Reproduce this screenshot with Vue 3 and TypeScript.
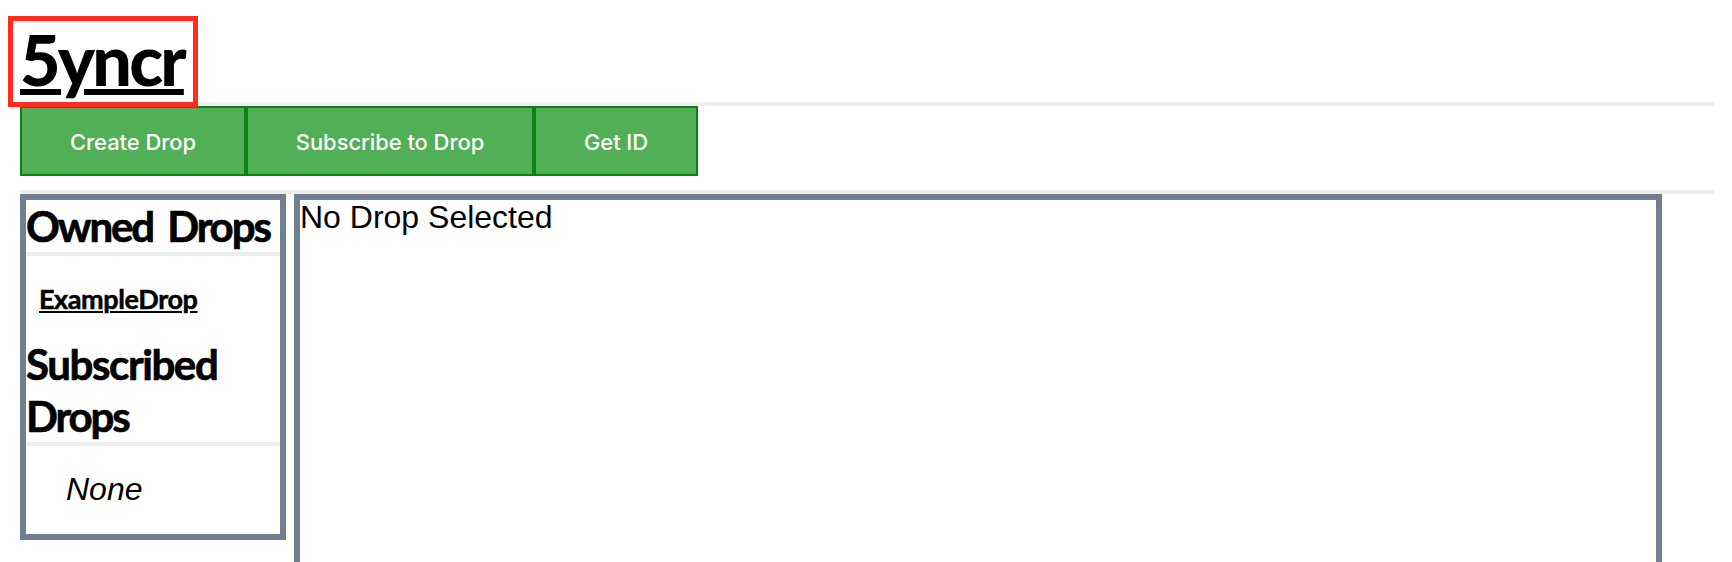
<script setup lang="ts">
import { ref } from 'vue'

interface Action {
  id: string
  label: string
}

const actions: Action[] = [
  { id: 'create', label: 'Create Drop' },
  { id: 'subscribe', label: 'Subscribe to Drop' },
  { id: 'identity', label: 'Get ID' },
]
const ownedDrops = ref<string[]>(['ExampleDrop'])
const subscribedDrops = ref<string[]>([])
</script>

<template>
  <div class="page">
    <header class="header">
      <h1 class="brand"><a class="brand-link">5yncr</a></h1>
    </header>
    <nav class="toolbar">
      <button v-for="action in actions" :key="action.id" :class="['action', action.id]" type="button">
        <span class="action-label">{{ action.label }}</span>
      </button>
    </nav>
    <main class="columns">
      <aside class="sidebar">
        <h2 class="heading owned">Owned Drops</h2>
        <div class="owned-list">
          <a v-for="drop in ownedDrops" :key="drop" class="drop">{{ drop }}</a>
        </div>
        <h2 class="heading subscribed">Subscribed <span class="tight">Drops</span></h2>
        <p v-if="!subscribedDrops.length" class="none">None</p>
      </aside>
      <section class="detail">No Drop Selected</section>
    </main>
  </div>
</template>

<style>
body {
  margin: 0;
  background: #fff;
}
</style>

<style scoped>
.page {
  box-sizing: border-box;
  width: 1732px;
  height: 562px;
  padding: 16px 18px 0 20px;
  overflow: hidden;
  color: #000;
  background: #fff;
  font: 32px/34px "Liberation Sans", Arial, sans-serif;
}
.header {
  height: 86px;
  border-bottom: 4px solid #eee;
}
.brand {
  position: relative;
  box-sizing: border-box;
  width: 190px;
  height: 91px;
  margin: 0 0 0 -12px;
  padding-left: 7px;
  border: 5px solid #ff2b1d;
  font: 900 70px/76px Lato, sans-serif;
  letter-spacing: -2.8px;
  white-space: nowrap;
}
.brand-link {
  color: #000;
  text-decoration: underline;
  text-decoration-thickness: 6px;
  text-underline-offset: 3px;
}
.toolbar {
  display: flex;
  height: 84px;
  border-bottom: 4px solid #eee;
}
.action {
  box-sizing: border-box;
  height: 70px;
  padding: 1px 0 0;
  border: 2px solid #108014;
  border-radius: 0;
  background: #51af55;
  color: #fff;
  font: 500 22px/26px Inter, sans-serif;
  letter-spacing: -0.07px;
  white-space: nowrap;
}
.create { width: 226px; }
.subscribe { width: 288px; }
.identity { width: 164px; }
.columns {
  display: flex;
  align-items: flex-start;
  gap: 8px;
}
.sidebar {
  box-sizing: border-box;
  width: 266px;
  height: 346px;
  border: 6px solid #708090;
}
.heading {
  margin: 0;
  border-bottom: 4px solid #eee;
  font: 700 42px/52px Lato, sans-serif;
  -webkit-text-stroke: 0.7px #000;
}
.owned {
  height: 52px;
  letter-spacing: -2.1px;
  word-spacing: 6px;
  white-space: nowrap;
}
.subscribed {
  letter-spacing: -1.4px;
}
.tight {
  letter-spacing: -2.1px;
}
.owned-list {
  height: 82px;
  padding: 25px 0 0 13px;
  box-sizing: border-box;
}
.drop {
  display: inline-block;
  font: 700 27px/33px Lato, sans-serif;
  letter-spacing: -0.4px;
  -webkit-text-stroke: 0.5px #000;
  text-decoration: underline;
  text-decoration-thickness: 2px;
  text-underline-offset: 2px;
}
.none {
  margin: 26px 0 0 40px;
  font-style: italic;
}
.detail {
  box-sizing: border-box;
  width: 1368px;
  height: 600px;
  border: 6px solid #708090;
}
</style>
